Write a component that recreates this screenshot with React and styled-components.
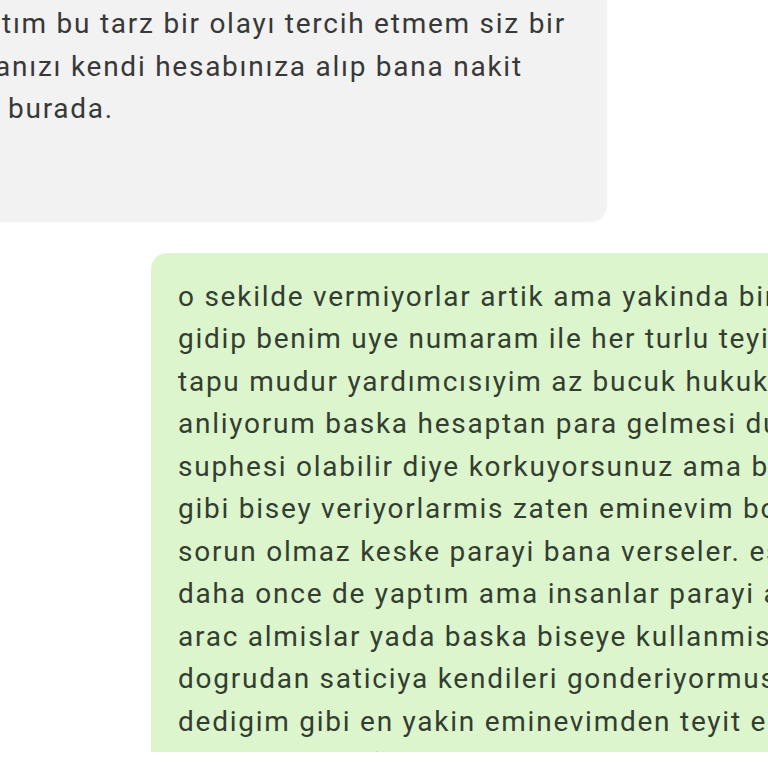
import React from "react";
import styled, { createGlobalStyle } from "styled-components";

const Global = createGlobalStyle`
  html, body {
    margin: 0;
    padding: 0;
    background: #ffffff;
    overflow: hidden;
  }
  body {
    font-family: Roboto, "Noto Sans", "Liberation Sans", sans-serif;
  }
`;

const Page = styled.div`
  width: 768px;
  height: 768px;
  overflow: hidden;
  background: #ffffff;
`;

const Viewport = styled.div`
  height: 752px;
  overflow: hidden;
  display: flex;
  flex-direction: column;
  gap: 32px;
`;

const Bubble = styled.div`
  flex: none;
  box-sizing: border-box;
  font-size: 28px;
  letter-spacing: 1.75px;
  line-height: 42.5px;
  border-radius: 16px;
  white-space: nowrap;
  overflow: hidden;
  ${(p) =>
    p.$mine
      ? `
    background: #dcf5cd;
    color: #333e30;
    margin-left: 151px;
    width: 900px;
    padding: 23px 27px 40px;
  `
      : `
    background: #f2f2f2;
    color: #383838;
    margin-left: -34px;
    margin-top: -30px;
    width: 640px;
    padding: 33px 24px 90px 34px;
    box-shadow: 1px 1px 2px rgba(0,0,0,0.06);
  `}
`;

const Line = styled.div`
  margin-left: ${(p) => p.$shift || 0}px;
`;

const incoming = [
  { t: "tım bu tarz bir olayı tercih etmem siz bir", s: 2 },
  { t: "anızı kendi hesabınıza alıp bana nakit", s: -5 },
  { t: "burada.", s: 8 },
];

const outgoing = [
  "o sekilde vermiyorlar artik ama yakinda bir eminevim",
  "gidip benim uye numaram ile her turlu teyit",
  "tapu mudur yardımcısıyim az bucuk hukuktan",
  "anliyorum baska hesaptan para gelmesi durumunda",
  "suphesi olabilir diye korkuyorsunuz ama bu",
  "gibi bisey veriyorlarmis zaten eminevim bolge",
  "sorun olmaz keske parayi bana verseler. eskiden",
  "daha once de yaptım ama insanlar parayi alip",
  "arac almislar yada baska biseye kullanmislar",
  "dogrudan saticiya kendileri gonderiyormus",
  "dedigim gibi en yakin eminevimden teyit edebilirsiniz",
  "ediyorum aktif",
];

export default function App() {
  return (
    <Page>
      <Global />
      <Viewport>
        <Bubble>
          {incoming.map((l, i) => (
            <Line key={i} $shift={l.s}>
              {l.t}
            </Line>
          ))}
        </Bubble>
        <Bubble $mine>
          {outgoing.map((l, i) => (
            <Line key={i}>{l}</Line>
          ))}
        </Bubble>
      </Viewport>
    </Page>
  );
}
